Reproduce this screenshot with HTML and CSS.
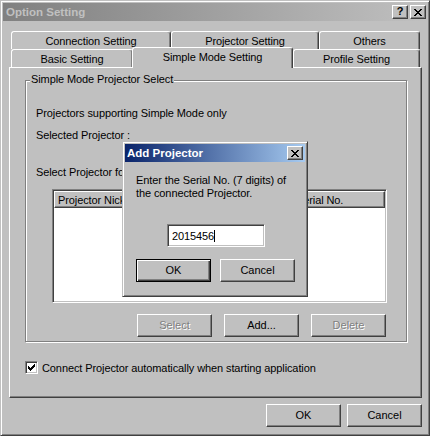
FILE: index.html
```html
<!DOCTYPE html>
<html>
<head>
    <meta charset="utf-8">
    <title>Option Setting</title>
    <link rel="stylesheet" href="styles.css">
</head>
<body>
    <div class="window">
        <div class="titlebar">
            <span class="title">Option Setting</span>
            <div class="caption-buttons">
                <span class="caption-btn help">?</span>
                <span class="caption-btn">
                    <svg width="8" height="7" viewBox="0 0 8 7"><path d="M0 0h2v1h-2z M6 0h2v1h-2z M1 1h2v1h-2z M5 1h2v1h-2z M2 2h4v1h-4z M3 3h2v1h-2z M2 4h4v1h-4z M1 5h2v1h-2z M5 5h2v1h-2z M0 6h2v1h-2z M6 6h2v1h-2z" fill="#000"/></svg>
                </span>
            </div>
        </div>

        <div class="content">
            <div class="tab-row">
                <div class="tab tab-conn">Connection Setting</div>
                <div class="tab tab-proj">Projector Setting</div>
                <div class="tab tab-others">Others</div>
            </div>
            <div class="tab-row">
                <div class="tab tab-basic">Basic Setting</div>
                <div class="tab tab-simple active">Simple Mode Setting</div>
                <div class="tab tab-profile">Profile Setting</div>
            </div>

            <div class="tab-panel">
                <div class="group">
                    <span class="group-title">Simple Mode Projector Select</span>
                    <p class="line">Projectors supporting Simple Mode only</p>
                    <p class="line selected">Selected Projector :</p>
                    <p class="line pick">Select Projector for Simple Mode</p>

                    <div class="lv-area">
                        <div class="listview">
                            <div class="lv-header">
                                <div class="lv-col name">Projector Nickname</div>
                                <div class="lv-col serial">Serial No.</div>
                            </div>
                        </div>
                        <div class="btn-row">
                            <button class="btn" disabled>Select</button>
                            <button class="btn">Add...</button>
                            <button class="btn" disabled>Delete</button>
                        </div>
                    </div>
                </div>

                <div class="check-row">
                    <span class="checkbox">
                        <svg width="7" height="7" viewBox="0 0 7 7"><path d="M6 0h1v1h-1z M5 1h2v1h-2z M0 2h1v1h-1z M4 2h3v1h-3z M0 3h2v1h-2z M3 3h3v1h-3z M0 4h5v1h-5z M1 5h3v1h-3z M2 6h1v1h-1z" fill="#000"/></svg>
                    </span>
                    <span class="check-label">Connect Projector automatically when starting application</span>
                </div>
            </div>

            <div class="footer">
                <button class="btn">OK</button>
                <button class="btn">Cancel</button>
            </div>
        </div>

        <!-- modal on top of the option window -->
        <div class="dialog">
            <div class="dlg-titlebar">
                <span class="dlg-title">Add Projector</span>
                <span class="caption-btn">
                    <svg width="8" height="7" viewBox="0 0 8 7"><path d="M0 0h2v1h-2z M6 0h2v1h-2z M1 1h2v1h-2z M5 1h2v1h-2z M2 2h4v1h-4z M3 3h2v1h-2z M2 4h4v1h-4z M1 5h2v1h-2z M5 5h2v1h-2z M0 6h2v1h-2z M6 6h2v1h-2z" fill="#000"/></svg>
                </span>
            </div>
            <div class="dlg-body">
                <p class="line">Enter the Serial No. (7 digits) of<br>the connected Projector.</p>
                <div class="edit">2015456<span class="caret"></span></div>
                <div class="dlg-buttons">
                    <button class="btn default">OK</button>
                    <button class="btn">Cancel</button>
                </div>
            </div>
        </div>
    </div>
</body>
</html>
```

FILE: styles.css
```css
body {
    margin: 0;
    background: #c0c0c0;
    font-family: "Liberation Sans", Arial, sans-serif;
    font-size: 11px;
    line-height: 13px;
    letter-spacing: -0.1px;
    color: #000;
}

.window {
    position: relative;
    width: 430px;
    height: 436px;
    box-sizing: border-box;
    border: 1px solid;
    border-color: #c0c0c0 #404040 #404040 #c0c0c0;
    box-shadow: inset 1px 1px 0 #fff, inset -1px -1px 0 #808080;
    padding: 2px;
}

.titlebar {
    height: 18px;
    display: flex;
    align-items: center;
    justify-content: space-between;
    padding: 0 1px 0 3px;
    background: linear-gradient(to right, #808080, #c0c0c0);
}
.title {
    font-weight: bold;
    font-size: 11.5px;
    line-height: 14px;
    letter-spacing: 0;
    color: #c0c0c0;
}
.caption-buttons {
    display: flex;
    gap: 2px;
}
.caption-btn {
    width: 16px;
    height: 14px;
    box-sizing: border-box;
    display: flex;
    align-items: center;
    justify-content: center;
    background: #c0c0c0;
    border: 1px solid;
    border-color: #fff #404040 #404040 #fff;
    box-shadow: inset -1px -1px 0 #808080;
}
.caption-btn.help {
    font-weight: bold;
    font-size: 11px;
    line-height: 11px;
    padding-bottom: 1px;
}

.content {
    padding: 10px 5px 0 6px;
}

/* tabs */
.tab-row {
    display: flex;
    align-items: flex-end;
    height: 18px;
    padding-left: 2px;
}
.tab {
    box-sizing: border-box;
    height: 18px;
    border: 1px solid;
    border-bottom: 0;
    border-color: #fff #404040 transparent #fff;
    border-radius: 3px 3px 0 0;
    box-shadow: inset -1px 0 0 #808080;
    background: #c0c0c0;
    text-align: center;
    padding-top: 3px;
    white-space: nowrap;
}
.tab.active {
    position: relative;
    z-index: 1;
    height: 21px;
    margin: 0 0 -1px -1px;
}
.tab-conn { width: 160px; }
.tab-proj { width: 148px; }
.tab-others { width: 101px; }
.tab-basic { width: 122px; }
.tab-simple { width: 161px; }
.tab-profile { width: 127px; }

.tab-panel {
    box-sizing: border-box;
    width: 413px;
    height: 331px;
    border: 1px solid;
    border-color: #fff #404040 #404040 #fff;
    box-shadow: inset -1px -1px 0 #808080;
    padding: 12px 0 0 15px;
}

.group {
    position: relative;
    box-sizing: border-box;
    width: 382px;
    height: 262px;
    border: 1px solid #808080;
    box-shadow: inset 1px 1px 0 #fff, 1px 1px 0 #fff;
    padding: 26px 0 0 10px;
}
.group-title {
    position: absolute;
    top: -8px;
    left: 4px;
    padding: 0 1px;
    background: #c0c0c0;
}

.line {
    margin: 0;
    white-space: nowrap;
}
.line.selected { margin-top: 9px; }
.line.pick { margin-top: 24px; }

.lv-area {
    margin: 10px 0 0 16px;
    width: 335px;
}
.listview {
    box-sizing: border-box;
    height: 114px;
    background: #fff;
    border: 1px solid;
    border-color: #808080 #fff #fff #808080;
    box-shadow: inset 1px 1px 0 #404040, inset -1px -1px 0 #c0c0c0;
    padding: 1px;
}
.lv-header {
    display: flex;
    height: 17px;
}
.lv-col {
    box-sizing: border-box;
    border: 1px solid;
    border-color: #fff #404040 #404040 #fff;
    box-shadow: inset -1px -1px 0 #808080;
    background: #c0c0c0;
    padding: 2px 0 0 3px;
    white-space: nowrap;
    overflow: hidden;
}
.lv-col.name { width: 238px; }
.lv-col.serial { flex: 1; }

.btn-row {
    display: flex;
    justify-content: flex-end;
    gap: 12px;
    margin-top: 11px;
    padding-right: 1px;
}

.btn {
    width: 75px;
    height: 23px;
    box-sizing: border-box;
    padding: 0;
    margin: 0;
    font: inherit;
    color: #000;
    background: #c0c0c0;
    border: 1px solid;
    border-color: #fff #404040 #404040 #fff;
    box-shadow: inset -1px -1px 0 #808080;
    border-radius: 0;
}
.btn:disabled {
    color: #808080;
    text-shadow: 1px 1px 0 #fff;
}
.btn.default {
    border-color: #000;
    box-shadow: inset 1px 1px 0 #fff, inset -1px -1px 0 #404040, inset -2px -2px 0 #808080;
}

.check-row {
    display: flex;
    gap: 4px;
    margin-top: 19px;
}
.checkbox {
    width: 13px;
    height: 13px;
    box-sizing: border-box;
    display: flex;
    align-items: center;
    justify-content: center;
    background: #fff;
    border: 1px solid;
    border-color: #808080 #fff #fff #808080;
    box-shadow: inset 1px 1px 0 #404040, inset -1px -1px 0 #c0c0c0;
}
.check-label {
    padding-top: 1px;
}

.footer {
    display: flex;
    justify-content: flex-end;
    gap: 6px;
    margin-top: 6px;
}

/* Add Projector dialog */
.dialog {
    position: absolute;
    left: 121px;
    top: 140px;
    z-index: 5;
    width: 186px;
    height: 156px;
    box-sizing: border-box;
    background: #c0c0c0;
    border: 1px solid;
    border-color: #c0c0c0 #404040 #404040 #c0c0c0;
    box-shadow: inset 1px 1px 0 #fff, inset -1px -1px 0 #808080;
    padding: 2px;
}
.dlg-titlebar {
    height: 18px;
    display: flex;
    align-items: center;
    justify-content: space-between;
    padding: 0 2px 0 2px;
    background: linear-gradient(to right, #0a246a, #a6caf0);
}
.dlg-title {
    font-weight: bold;
    font-size: 11.5px;
    line-height: 14px;
    letter-spacing: 0;
    color: #fff;
}
.dlg-body {
    padding: 12px 0 0 11px;
}
.edit {
    box-sizing: border-box;
    width: 98px;
    height: 23px;
    margin: 24px 0 0 31px;
    padding: 5px 0 0 4px;
    background: #fff;
    border: 1px solid;
    border-color: #808080 #fff #fff #808080;
    box-shadow: inset 1px 1px 0 #404040, inset -1px -1px 0 #c0c0c0;
}
.caret {
    display: inline-block;
    width: 1px;
    height: 12px;
    background: #000;
    vertical-align: top;
}
.dlg-buttons {
    display: flex;
    gap: 9px;
    margin-top: 12px;
}
```
